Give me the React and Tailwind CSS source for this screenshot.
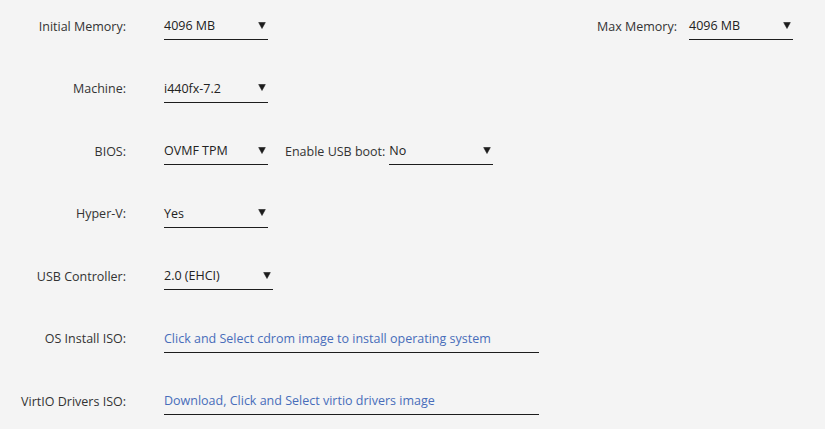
import React from "react";

const Arrow = () => (
  <svg width="8" height="7" viewBox="0 0 8 7" className="shrink-0 mb-[3px]">
    <path d="M0.7 0.5 H7.3 L4 6.5 Z" fill="#1c1c1c" stroke="#1c1c1c" strokeWidth="0.6" strokeLinejoin="round" />
  </svg>
);

const Select = ({ value, width = "w-[104px]" }) => (
  <div className={`${width} h-[28px] pt-[2px] flex items-center justify-between border-b border-[#1c1c1c] pr-[2px]`}>
    <span className="text-[#222]">{value}</span>
    <Arrow />
  </div>
);

const Label = ({ children }) => (
  <div className="w-[127px] shrink-0 text-right text-[#333] pr-[1px] pt-[2px]">{children}</div>
);

const Row = ({ label, children }) => (
  <div className="h-[62.5px] flex items-start">
    <div className="flex items-center h-[28px] w-full">
      <Label>{label}</Label>
      <div className="ml-[37px] flex items-center flex-1">{children}</div>
    </div>
  </div>
);

const IsoPicker = ({ text }) => (
  <div className="w-[375px] h-[28px] pt-[2px] flex items-center border-b border-[#1c1c1c] text-[#486dba] cursor-pointer">
    {text}
  </div>
);

export default function App() {
  return (
    <div
      className="w-[825px] h-[429px] bg-[#f4f4f4] pt-[12px] text-[12.5px] overflow-hidden"
      style={{ fontFamily: '"Open Sans", "Noto Sans", sans-serif' }}
    >
      <Row label="Initial Memory:">
        <div className="flex items-center justify-between w-full pr-[32px]">
          <Select value="4096 MB" />
          <div className="flex items-center">
            <span className="text-[#333] mr-[12px] pt-[2px]">Max Memory:</span>
            <Select value="4096 MB" />
          </div>
        </div>
      </Row>
      <Row label="Machine:">
        <Select value="i440fx-7.2" />
      </Row>
      <Row label="BIOS:">
        <Select value="OVMF TPM" />
        <span className="text-[#333] ml-[17px] mr-[4px] pt-[2px]">Enable USB boot:</span>
        <Select value="No" />
      </Row>
      <Row label="Hyper-V:">
        <Select value="Yes" />
      </Row>
      <Row label="USB Controller:">
        <Select value="2.0 (EHCI)" width="w-[109px]" />
      </Row>
      <Row label="OS Install ISO:">
        <IsoPicker text="Click and Select cdrom image to install operating system" />
      </Row>
      <Row label="VirtIO Drivers ISO:">
        <IsoPicker text="Download, Click and Select virtio drivers image" />
      </Row>
    </div>
  );
}
